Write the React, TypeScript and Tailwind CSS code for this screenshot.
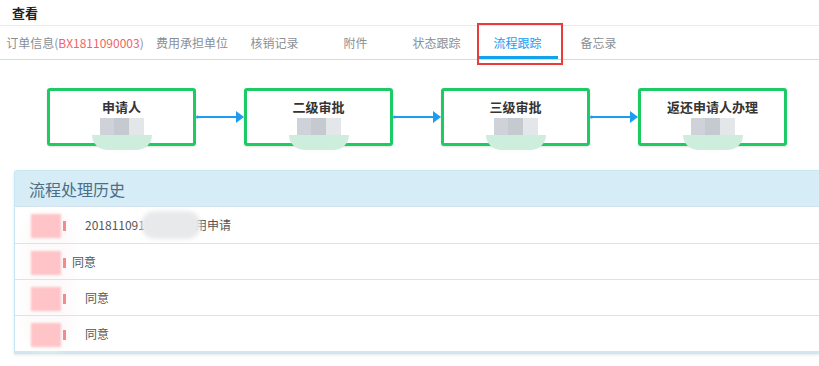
import React from 'react';

const tabs = [
  { id: 'order', w: 'w-[150px]' },
  { id: 'cost', label: '费用承担单位', w: 'w-[84px]' },
  { id: 'writeoff', label: '核销记录', w: 'w-[81px]' },
  { id: 'attach', label: '附件', w: 'w-[81px]' },
  { id: 'status', label: '状态跟踪', w: 'w-[81px]' },
  { id: 'flow', label: '流程跟踪', w: 'w-[81px]' },
  { id: 'memo', label: '备忘录', w: 'w-[81px]' },
];

const steps = ['申请人', '二级审批', '三级审批', '返还申请人办理'];

// blurred avatar under each step name
const Avatar = () => (
  <div className="flex flex-col items-center mt-[3px]">
    <div className="flex w-[44px] h-[17px] blur-[0.6px]">
      <div className="flex-1 bg-[#cfd2d8]" />
      <div className="flex-1 bg-[#c5c9d0]" />
      <div className="flex-1 bg-[#e4e7ea]" />
    </div>
    <div className="w-[60px] h-[15px] bg-[#cdeedd] rounded-b-[30px] blur-[0.4px]" />
  </div>
);

const Arrow = () => (
  <svg width="48" height="12" viewBox="0 0 48 12" className="shrink-0">
    <circle cx="1.5" cy="6" r="1.5" fill="#1e9cf0" />
    <line x1="1" y1="6" x2="42" y2="6" stroke="#1e9cf0" strokeWidth="2" />
    <path d="M40 0 L48 6 L40 12 Z" fill="#1e9cf0" />
  </svg>
);

const rows = [
  { text: '201811091', tail: '用申请', indent: 'pl-[70px]' },
  { text: '同意', indent: 'pl-[57px]' },
  { text: '同意', indent: 'pl-[70px]' },
  { text: '同意', indent: 'pl-[70px]' },
];

export default function App() {
  return (
    <div className="w-[819px] h-[366px] bg-white overflow-hidden relative" style={{ fontFamily: '"Noto Sans CJK SC", "Liberation Sans", sans-serif' }}>
      <div className="h-[25px] flex items-center pl-[12px] text-[13px] font-bold text-[#222]">查看</div>

      <div className="h-[35px] border-t border-[#ebebeb] border-b border-b-[#d5dbe1] flex">
        {tabs.map((t) => (
          <div key={t.id} className={`${t.w} h-full relative flex items-center justify-center text-[12px] ${t.id === 'flow' ? 'text-[#1a9cf2]' : 'text-[#8a8f96]'}`}>
            {t.id === 'order' ? (
              <span>订单信息(<span className="text-[#f56262]">BX1811090003</span>)</span>
            ) : (
              t.label
            )}
            {t.id === 'flow' && <div className="absolute left-[1px] right-0 bottom-0 h-[3px] bg-[#14a2ef]" />}
          </div>
        ))}
      </div>

      {/* annotation box round the active tab */}
      <div className="absolute left-[477px] top-[23px] w-[86px] h-[42px] border-2 border-[#ec3b3b]" />

      <div className="flex items-center pl-[47px] pt-[28px]">
        {steps.map((s, i) => (
          <React.Fragment key={s}>
            <div className="w-[149px] h-[58px] border-[3px] border-[#1ccb63] rounded-[3px] flex flex-col items-center pt-[8px] shadow-[0_1px_2px_rgba(0,0,0,0.12)]">
              <div className="text-[13px] font-bold text-[#333] leading-[16px]">{s}</div>
              <Avatar />
            </div>
            {i < steps.length - 1 && <Arrow />}
          </React.Fragment>
        ))}
      </div>

      <div className="ml-[14px] mt-[24px] border border-[#c9e7f2] border-r-0 rounded-tl-[3px] shadow-[0_1px_3px_rgba(0,0,0,0.1)] relative">
        <div className="h-[36px] bg-[#d6ecf6] border-b border-[#d2e2ec] flex items-center pl-[14px] text-[16px] text-[#4a6f86]">流程处理历史</div>
        <div className="absolute left-[8px] top-[40px] w-[50px] h-[140px] rounded-full bg-[#fbf7f7] opacity-60 blur-[4px]" />
        {rows.map((r, i) => (
          <div key={i} className={`h-[36px] flex items-center text-[12px] text-[#555] ${r.indent} ${i > 0 ? 'border-t border-[#e2e2e2]' : ''} relative`}>
            <div className="absolute left-[16px] top-[7px] w-[30px] h-[24px] bg-[#ffc4c7] blur-[1px]" />
            <div className="absolute left-[48px] top-[14px] w-[3px] h-[10px] bg-[#f08c90] blur-[0.5px]" />
            <span>{r.text}</span>
            {r.tail && (
              <>
                <span className="w-[60px] h-[28px] rounded-full bg-[#e8e9eb] blur-[2px] -ml-[4px]" />
                <span className="-ml-[6px]">{r.tail}</span>
              </>
            )}
          </div>
        ))}
        <div className="h-[2px] bg-[#cfe8f2]" />
      </div>
    </div>
  );
}
